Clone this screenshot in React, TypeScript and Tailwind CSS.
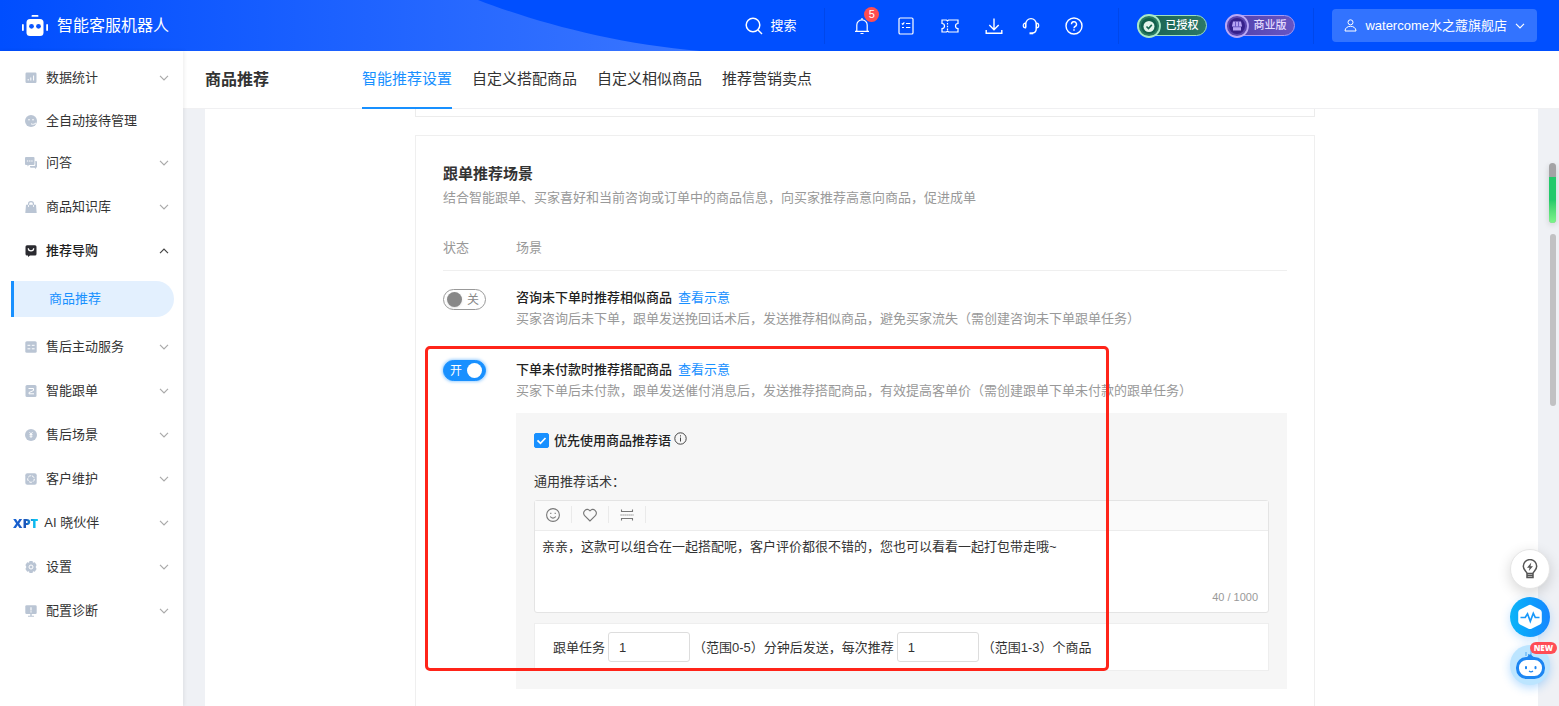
import React, { useState } from 'react';
import type { ReactNode } from 'react';

function Chevron({ up = false, className = '' }: { up?: boolean; className?: string }) {
  return (
    <svg viewBox="0 0 10 6" className={`h-1.5 w-2.5 shrink-0 ${className}`} fill="none" stroke="currentColor" strokeWidth="1.2">
      <path d={up ? 'M1 5.2 5 1.2l4 4' : 'M1 .8l4 4 4-4'} />
    </svg>
  );
}

function RobotLogo() {
  return (
    <svg viewBox="0 0 28 24" className="h-6 w-7" fill="#fff">
      <rect x="10.5" y="1" width="7" height="1.8" rx=".9" />
      <rect x="5.5" y="5" width="17" height="17" rx="3.5" />
      <rect x="1" y="10" width="1.8" height="7" rx=".9" />
      <rect x="25.200" y="10" width="1.8" height="7" rx=".9" />
      <circle cx="10.5" cy="12.3" r="2.4" fill="#0a55ff" />
      <circle cx="17.5" cy="12.3" r="2.4" fill="#0a55ff" />
    </svg>
  );
}

function LineIcon({ children, label }: { children: ReactNode; label: string }) {
  return (
    <svg viewBox="0 0 18 18" role="img" aria-label={label} className="size-[18px]" fill="none" stroke="#fff" strokeWidth="1.2">
      {children}
    </svg>
  );
}

function MenuIcon({ children }: { children: ReactNode }) {
  return (
    <svg viewBox="0 0 12 12" className="size-3 shrink-0" fill="currentColor">
      {children}
    </svg>
  );
}

const icons = {
  stats: (
    <MenuIcon>
      <rect x=".5" y=".5" width="11" height="10.5" rx="1.2" />
      <path d="M3.2 8.5V7M5.8 8.5V5.5M8.6 8.5V3.5" stroke="#fff" />
    </MenuIcon>
  ),
  face: (
    <MenuIcon>
      <circle cx="6" cy="6" r="6" />
      <circle cx="4" cy="4.8" r=".8" fill="#fff" />
      <circle cx="8" cy="4.8" r=".8" fill="#fff" />
      <path d="M6 8.8c1.800 1 4 .4 5-1" stroke="#fff" fill="none" />
    </MenuIcon>
  ),
  chat: (
    <MenuIcon>
      <path d="M1 0h7.500q1 0 1 1v6q0 1-1 1H4L2.500 9.500V8H1q-1 0-1-1V1q0-1 1-1Z" />
      <path d="M10.300 4H11q1 0 1 1v4.800q0 1-1 1V12L9.500 10.800H6q-1 0-1-1V8.900h4.300q1 0 1-1Z" />
      <path d="M1.900 4h1.300M4.100 4h1.300M6.300 4h1.300" stroke="#fff" strokeWidth="1.200" />
    </MenuIcon>
  ),
  bag: (
    <MenuIcon>
      <path d="M1 3.800h10l.7 8.200H.3Z" />
      <path d="M3.500 6V3.200a2.500 2.500 0 0 1 5 0V6" fill="none" stroke="currentColor" strokeWidth="1.200" />
      <path d="M3.500 4v2M8.500 4v2" stroke="#fff" strokeWidth=".8" />
    </MenuIcon>
  ),
  guide: (
    <MenuIcon>
      <path d="M2 .3h8q1.500 0 1.500 1.500v7.200q0 1.500-1.500 1.500H5L3 12v-1.500H2Q.5 10.500.5 9V1.800Q.5.3 2 .3Z" />
      <path d="M3.300 3.200a2.700 2.700 0 0 0 5.400 0" fill="none" stroke="#fff" strokeWidth="1.200" />
    </MenuIcon>
  ),
  grid: (
    <MenuIcon>
      <rect x=".3" y=".3" width="11.400" height="11.400" rx="1.500" />
      <path d="M2.500 4.300h2.800M6.800 4.300h2.800M2.500 7.800h2.800M6.800 7.800h2.800" stroke="#fff" />
    </MenuIcon>
  ),
  order: (
    <MenuIcon>
      <rect x=".5" y="0" width="11" height="12" rx="1.500" />
      <path d="M3.500 3.500h5v2l-4.500 2v1.300h5" fill="none" stroke="#fff" />
    </MenuIcon>
  ),
  yen: (
    <MenuIcon>
      <circle cx="6" cy="6" r="6" />
      <path d="M4.500 3.200 6 5l1.500-1.800M6 5v4M4.500 5.500h3M4.500 7.200h3" fill="none" stroke="#fff" strokeWidth=".9" />
    </MenuIcon>
  ),
  customer: (
    <MenuIcon>
      <rect x=".3" y=".3" width="11.400" height="11.400" rx="2" />
      <circle cx="6" cy="6" r="3.300" fill="none" stroke="#fff" strokeDasharray="3 1" />
    </MenuIcon>
  ),
  gear: (
    <MenuIcon>
      <path d="M4.500 0h3L8 1.700l1.800-.4L11.600 4l-1 2 1 2-1.800 2.700L8 10.300 7.500 12h-3L4 10.300l-1.800.4L.4 8l1-2-1-2 1.800-2.700L4 1.700Z" />
      <circle cx="6" cy="6" r="2" fill="none" stroke="#fff" />
    </MenuIcon>
  ),
  monitor: (
    <MenuIcon>
      <rect x=".3" y=".3" width="11.400" height="8.700" rx="1.300" />
      <path d="M5.300 9h1.400v1.800H5.300ZM3 10.700h6v1H3Z" />
      <path d="M6 2.200v3.200M6 6.300v1.200" stroke="#fff" strokeWidth="1.100" />
    </MenuIcon>
  ),
};

type MenuEntry = { label: string; icon?: ReactNode; expandable?: boolean; active?: boolean; brand?: boolean; child?: string };

const menu: MenuEntry[] = [
  { label: '数据统计', icon: icons.stats, expandable: true },
  { label: '全自动接待管理', icon: icons.face },
  { label: '问答', icon: icons.chat, expandable: true },
  { label: '商品知识库', icon: icons.bag, expandable: true },
  { label: '推荐导购', icon: icons.guide, expandable: true, active: true, child: '商品推荐' },
  { label: '售后主动服务', icon: icons.grid, expandable: true },
  { label: '智能跟单', icon: icons.order, expandable: true },
  { label: '售后场景', icon: icons.yen, expandable: true },
  { label: '客户维护', icon: icons.customer, expandable: true },
  { label: 'AI 晓伙伴', brand: true, expandable: true },
  { label: '设置', icon: icons.gear, expandable: true },
  { label: '配置诊断', icon: icons.monitor, expandable: true },
];

function Sidebar() {
  return (
    <nav aria-label="主菜单" className="relative z-10 w-[183px] shrink-0 bg-white pt-[5px] shadow-[1px_0_4px_rgba(0,0,0,0.08)]">
      <ul>
        {menu.map((item) => (
          <li key={item.label}>
            <button
              type="button"
              className={`flex w-full items-center pr-[14px] text-[13px] ${item.expandable ? 'h-11' : 'h-[41px]'} ${
                item.brand ? 'gap-1.5 pl-[13px]' : 'gap-[9px] pl-[25px]'
              } ${item.active ? 'font-medium text-[#222]' : 'text-[#333]'}`}
            >
              {item.brand ? (
                <span className="bg-linear-to-r from-[#1565d8] via-[#1d55b8] to-[#08c4f4] to-90% bg-clip-text font-['Open_Sans'] text-[13px] leading-4 font-extrabold text-transparent">
                  XPT
                </span>
              ) : (
                <span className={item.active ? 'text-[#2b2b30]' : 'text-[#bac5d4]'}>{item.icon}</span>
              )}
              <span>{item.label}</span>
              {item.expandable && <Chevron up={item.active} className={`ml-auto ${item.active ? 'text-[#444]' : 'text-[#aaa]'}`} />}
            </button>
            {item.child && (
              <a
                href="#recommend"
                className="my-2 mr-[9px] ml-[11px] flex h-9 items-center rounded-r-full border-l-[3px] border-[#1890ff] bg-[#e3f0fe] pl-[35px] text-[13px] text-[#1890ff]"
              >
                {item.child}
              </a>
            )}
          </li>
        ))}
      </ul>
    </nav>
  );
}

function HeaderBackdrop() {
  return (
    <svg viewBox="0 0 700 51" className="absolute top-0 left-0 h-full w-[700px]" preserveAspectRatio="none" aria-hidden="true">
      <defs>
        <linearGradient id="wave" x1="0" x2="1" y1="0" y2="0">
          <stop offset="0" stopColor="#004eff" />
          <stop offset="1" stopColor="#3b76ff" />
        </linearGradient>
      </defs>
      <path d="M0 0H478C535 22 615 44 700 51H0Z" fill="url(#wave)" />
    </svg>
  );
}

function AuthPill() {
  return (
    <span className="relative flex h-6 w-[70px] items-center">
      <span className="flex h-[21px] w-full items-center justify-end rounded-full border border-[#9fe0bd] bg-linear-to-r from-[#16604f] to-[#2c7866] pr-2 text-[11px] font-medium text-white">
        已授权
      </span>
      <svg viewBox="0 0 24 24" className="absolute left-0 size-6" aria-hidden="true">
        <circle cx="12" cy="12" r="11" fill="#2a7a62" stroke="#a9e8c6" strokeWidth="1.800" />
        <circle cx="12" cy="12" r="8" fill="#11604c" />
        <circle cx="12" cy="12.500" r="5.500" fill="#e4f5ec" />
        <path d="m9.500 12.500 2 2 3.300-3.600" fill="none" stroke="#17664f" strokeWidth="1.600" />
      </svg>
    </span>
  );
}

function EditionPill() {
  return (
    <span className="relative flex h-6 w-[70px] items-center">
      <span className="flex h-[21px] w-full items-center justify-end rounded-full border border-[#a99af0] bg-linear-to-r from-[#5140a8] to-[#6655c4] pr-2 text-[11px] font-medium text-[#e4dcff]">
        商业版
      </span>
      <svg viewBox="0 0 24 24" className="absolute left-0 size-6" aria-hidden="true">
        <circle cx="12" cy="12" r="11" fill="#5a46b0" stroke="#b9a8f6" strokeWidth="1.800" />
        <circle cx="12" cy="12" r="8" fill="#35208a" />
        <path d="M8 7.500h8l1 4.500a2 2 0 0 1-1 1V16.500H8V13a2 2 0 0 1-1-1Z" fill="#b5a2f4" />
        <path d="M10.500 7.500v5M13.500 7.500v5M8 12.800h8" stroke="#5a46b8" strokeWidth=".8" />
      </svg>
    </span>
  );
}

function Header() {
  return (
    <header className="relative flex h-[51px] shrink-0 items-center bg-[#004fff] pr-[22px] pl-[21px] text-white">
      <HeaderBackdrop />
      <div className="relative flex items-center gap-2">
        <RobotLogo />
        <span className="text-[16px] leading-6">智能客服机器人</span>
      </div>

      <div className="relative ml-auto flex items-center text-[13px]">
        <button type="button" className="mr-7 flex items-center gap-[7px]">
          <LineIcon label="">
            <circle cx="8" cy="8" r="6.800" strokeWidth="1.500" />
            <path d="m13 13 4 4" strokeWidth="1.500" />
          </LineIcon>
          搜索
        </button>
        <span className="mr-7 h-9 w-px bg-[#0047ea]" />
        <button type="button" className="relative mr-[26px]">
          <LineIcon label="通知">
            <path d="M3.800 14V8a5.200 5.200 0 0 1 10.400 0v6M2 14.300h14M9 1v1.800M7.500 16.500h3" />
          </LineIcon>
          <span className="absolute -top-[10px] -right-2 flex size-[15px] items-center justify-center rounded-full bg-[#ff4d4f] text-[11px] leading-none">5</span>
        </button>
        <button type="button" className="mr-[26px]">
          <LineIcon label="清单">
            <rect x="2" y="1" width="14" height="16" rx="1.300" />
            <path d="m4.800 6.300 1 1 1.500-2M5 10.500h2M9 6.500h4.300M9 10.500h4.300" />
          </LineIcon>
        </button>
        <button type="button" className="mr-[26px]">
          <LineIcon label="卡券">
            <path d="M1 3h4.500l1 1 1-1H17v3.500a2.500 2.500 0 0 0 0 5V15H7.500l-1-1-1 1H1v-3.500a2.500 2.500 0 0 0 0-5Z" />
            <path d="M6.500 6v7" strokeDasharray="1.500 1.200" />
          </LineIcon>
        </button>
        <button type="button" className="mr-[19px]">
          <LineIcon label="下载">
            <path d="M9 1.500v11M4.300 8 9 12.700 13.700 8M1.200 13v3.300h15.600V13" strokeWidth="1.400" />
          </LineIcon>
        </button>
        <button type="button" className="mr-[25px]">
          <LineIcon label="客服">
            <path d="M3.800 10.500V6.800a5.200 5.200 0 0 1 10.400 0v5.200c0 2-1.500 3.700-3.500 4" strokeWidth="1.400" />
            <path d="M3.500 6.200C.5 6.200.5 11 3.500 11ZM14.500 6.200c3 0 3 4.800 0 4.800Z" />
            <path d="M7.500 16.300h3.700" strokeWidth="2" />
          </LineIcon>
        </button>
        <button type="button" className="mr-[35px]">
          <LineIcon label="帮助">
            <circle cx="9" cy="9" r="8" strokeWidth="1.400" />
            <path d="M6.500 7.300a2.500 2.500 0 1 1 3.600 2.200c-.8.400-1.100.8-1.100 1.700M9 12.300v1.400" strokeWidth="1.400" />
          </LineIcon>
        </button>
        <span className="mr-[18px] h-9 w-px bg-[#0047ea]" />
        <AuthPill />
        <span className="w-[18px]" />
        <EditionPill />
        <span className="mr-[18px] ml-[18px] h-9 w-px bg-[#0047ea]" />
        <button type="button" className="flex h-[33px] items-center gap-2 rounded bg-[#3273ff] px-3">
          <svg viewBox="0 0 13 13" className="size-[13px]" fill="none" stroke="#fff" aria-hidden="true">
            <circle cx="6.500" cy="3.300" r="2.500" />
            <path d="M1 12c0-6.300 11-6.300 11 0Z" />
          </svg>
          <span>watercome水之蔻旗舰店</span>
          <Chevron />
        </button>
      </div>
    </header>
  );
}

const tabs = ['智能推荐设置', '自定义搭配商品', '自定义相似商品', '推荐营销卖点'];

function PageBar() {
  return (
    <div className="flex h-[58px] shrink-0 items-stretch border-b border-[#f0f0f2] bg-white pl-[22px]">
      <h1 className="self-center text-[16px] leading-6 font-bold text-[#333]">商品推荐</h1>
      <div role="tablist" className="-mb-px ml-[93px] flex gap-5">
        {tabs.map((tab, i) => (
          <button
            key={tab}
            type="button"
            role="tab"
            aria-selected={i === 0}
            className={`border-b-2 text-[15px] ${i === 0 ? 'border-[#1890ff] text-[#1890ff]' : 'border-transparent text-[#333]'}`}
          >
            {tab}
          </button>
        ))}
      </div>
    </div>
  );
}

function Toggle({ initial, label }: { initial: boolean; label: string }) {
  const [on, setOn] = useState(initial);
  return (
    <button
      type="button"
      role="switch"
      aria-checked={on}
      aria-label={label}
      onClick={() => setOn(!on)}
      className={`flex h-[21px] w-[43px] items-center justify-between rounded-full border text-[12px] leading-none ${
        on
          ? 'flex-row border-[#1890ff] bg-[#1890ff] pr-[3px] pl-1.5 text-white shadow-[0_0_3px_1px_rgba(24,144,255,0.4)]'
          : 'flex-row-reverse border-[#999] bg-white pr-1.5 pl-[3px] text-[#888]'
      }`}
    >
      <span>{on ? '开' : '关'}</span>
      <span className={`size-[15px] rounded-full ${on ? 'bg-white' : 'bg-[#888] shadow-sm'}`} />
    </button>
  );
}

function SceneText({ title, desc }: { title: string; desc: string }) {
  return (
    <div className="text-[13px] leading-[21px]">
      <div className="flex gap-1.5">
        <h3 className="font-medium text-[#222]">{title}</h3>
        <a href="#demo" className="text-[#1890ff]">
          查看示意
        </a>
      </div>
      <p className="text-[#999]">{desc}</p>
    </div>
  );
}

function ToolButton({ label, children }: { label: string; children: ReactNode }) {
  return (
    <button type="button" aria-label={label} className="flex h-[17px] w-[37px] items-center justify-center border-r border-[#eaeaea]">
      <svg viewBox="0 0 14 14" className="size-3.5" fill="none" stroke="#777" strokeWidth="1.100">
        {children}
      </svg>
    </button>
  );
}

function MessageEditor() {
  return (
    <div className="rounded-[3px] border border-[#e4e4e4] bg-white">
      <div className="flex h-[30px] items-center border-b border-[#ececec] bg-[#fafafa] pb-0.5">
        <ToolButton label="表情">
          <circle cx="7" cy="7" r="6.400" />
          <path d="M4.800 4.800v1.200M9.200 4.800v1.200M4.300 8.600c1 2 4.400 2 5.400 0" />
        </ToolButton>
        <ToolButton label="收藏">
          <path d="M7 13 1.400 7.400C-1 3.800 3.500-1 7 2.800c3.500-3.800 8 1 5.600 4.600Z" />
        </ToolButton>
        <ToolButton label="分段">
          <path d="M1.500 1.500v2h11v-2M1.500 12.500v-2h11v2" />
          <path d="M.5 7h13" strokeDasharray="1.200 .8" />
        </ToolButton>
      </div>
      <textarea
        id="script"
        className="block h-14 w-full resize-none px-[7px] pt-[5px] text-[13px] leading-[21px] text-[#333] outline-none"
        defaultValue="亲亲，这款可以组合在一起搭配呢，客户评价都很不错的，您也可以看看一起打包带走哦~"
      />
      <div className="pr-2.5 pb-[5px] text-right text-[11px] leading-5 text-[#999]">40 / 1000</div>
    </div>
  );
}

function SmallInput({ label }: { label: string }) {
  return (
    <input
      aria-label={label}
      defaultValue="1"
      className="mx-[3px] h-[30px] w-[82px] rounded-[3px] border border-[#ddd] bg-white px-2.5 text-[13px] text-[#333] outline-none"
    />
  );
}

function PairingForm() {
  return (
    <div className="mt-3 bg-[#f6f6f6] px-[18px] pt-[17px] pb-[18px] text-[13px] leading-[21px] text-[#333]">
      <div className="flex items-center">
        <label className="flex items-center gap-[5px] font-medium text-[#222]">
          <span className="relative flex size-[15px]">
            <input type="checkbox" defaultChecked className="peer size-[15px] appearance-none rounded-[2px] border border-[#ccc] bg-white checked:border-[#1890ff] checked:bg-[#1890ff]" />
            <svg viewBox="0 0 15 15" className="pointer-events-none absolute inset-0 hidden peer-checked:block" fill="none" stroke="#fff" strokeWidth="1.700">
              <path d="m3.500 7.300 3 3 5-5.300" />
            </svg>
          </span>
          优先使用商品推荐语
        </label>
        <svg viewBox="0 0 13 13" className="mb-1 ml-[3px] size-[13px]" fill="none" stroke="#444" aria-hidden="true">
          <circle cx="6.500" cy="6.500" r="5.700" />
          <path d="M6.500 5.500v4M6.500 3.300v1.200" />
        </svg>
      </div>
      <label htmlFor="script" className="mt-5 mb-2 block">
        通用推荐话术：
      </label>
      <MessageEditor />
      <div className="mt-2.5 flex items-center border border-[#eee] bg-white px-[18px] py-2">
        跟单任务
        <SmallInput label="延迟分钟数" />
        （范围0-5）分钟后发送，每次推荐
        <SmallInput label="推荐商品数" />
        （范围1-3）个商品
      </div>
    </div>
  );
}

function SceneCard() {
  return (
    <section className="mt-[18px] min-h-[640px] border border-[#efefef] bg-white px-[27px] pt-7">
      <h2 className="text-[15px] leading-5 font-bold text-[#333]">跟单推荐场景</h2>
      <p className="mt-1 text-[13px] leading-5 text-[#999]">结合智能跟单、买家喜好和当前咨询或订单中的商品信息，向买家推荐高意向商品，促进成单</p>
      <table className="mt-7 w-full border-separate border-spacing-0 text-left text-[13px]">
        <thead>
          <tr className="leading-5 text-[#999]">
            <th className="h-[35px] w-[73px] border-b border-[#efefef] pb-3 align-bottom font-normal">状态</th>
            <th className="h-[35px] border-b border-[#efefef] pb-3 align-bottom font-normal">场景</th>
          </tr>
        </thead>
        <tbody>
          <tr className="align-top">
            <td className="pt-[18px]">
              <Toggle initial={false} label="咨询未下单时推荐相似商品" />
            </td>
            <td className="pt-4 pb-3.5">
              <SceneText
                title="咨询未下单时推荐相似商品"
                desc="买家咨询后未下单，跟单发送挽回话术后，发送推荐相似商品，避免买家流失（需创建咨询未下单跟单任务）"
              />
            </td>
          </tr>
          <tr className="align-top">
            <td className="relative pt-[17px]">
              <Toggle initial label="下单未付款时推荐搭配商品" />
              <div className="pointer-events-none absolute top-[3px] -left-[18px] z-10 h-[325px] w-[684px] rounded-[5px] border-[3px] border-[#ff2419]" />
            </td>
            <td className="pt-4">
              <SceneText
                title="下单未付款时推荐搭配商品"
                desc="买家下单后未付款，跟单发送催付消息后，发送推荐搭配商品，有效提高客单价（需创建跟单下单未付款的跟单任务）"
              />
              <PairingForm />
            </td>
          </tr>
        </tbody>
      </table>
    </section>
  );
}

function FloatingTools() {
  return (
    <div className="absolute right-[9px] bottom-[21px] z-20 flex flex-col gap-2">
      <button type="button" aria-label="提示" className="flex size-10 items-center justify-center rounded-full border border-[#e6e6e6] bg-white shadow-[0_4px_14px_rgba(0,0,0,0.16)]">
        <svg viewBox="0 0 16 20" className="h-5 w-4" fill="none" stroke="#555" strokeWidth="1.500">
          <path d="M5 14.500c0-2-3.700-3.200-3.700-7.200a6.700 6.700 0 0 1 13.400 0c0 4-3.700 5.200-3.700 7.200ZM5 14.500V18.500h6v-4M5 16.500h6" />
          <path d="M9.300 3.500 5 8.800h2.500L6.800 12 11 7.200H8.500Z" fill="#555" stroke="none" />
        </svg>
      </button>
      <button type="button" aria-label="诊断" className="flex size-10 items-center justify-center rounded-full bg-linear-to-r from-[#0cb4f8] to-[#1787ff] shadow-[0_3px_10px_rgba(24,144,255,0.25)]">
        <svg viewBox="0 0 26 26" className="size-[26px]">
          <path d="M13 .8q1 0 2 .6l8 4q1.800 1 1.800 3v9q0 2-1.800 3l-8 4q-2 1.200-4 0l-8-4q-1.800-1-1.800-3v-9q0-2 1.800-3l8-4q1-.6 2-.6Z" fill="#fff" />
          <path d="M3.500 13.500h4.700l2.300-3.700 2.800 7.500 3-8 2 4.200h4.200" fill="none" stroke="#1898fa" strokeWidth="1.700" />
        </svg>
      </button>
      <button type="button" aria-label="智能助手" className="relative flex size-10 items-center justify-center rounded-full bg-[#bce5ff] shadow-[0_3px_10px_rgba(24,144,255,0.3)]">
        <svg viewBox="0 0 40 40" className="size-10">
          <path d="M16 7v4M18.500 9v3M21 5v8" stroke="#4aa8f5" fill="none" />
          <path d="M16 13 20 9l5 4Z" fill="#1c84ee" />
          <rect x="7.500" y="13.500" width="26" height="19" rx="9" fill="#fff" stroke="#1c86f2" strokeWidth="3" />
          <rect x="15" y="21" width="2" height="3.200" rx="1" fill="#1c86f2" />
          <rect x="24.500" y="21" width="2" height="3.200" rx="1" fill="#1c86f2" />
          <path d="M19 26q2 1.600 4 0" stroke="#1c86f2" fill="none" strokeWidth="1.300" />
        </svg>
        <span className="absolute -top-[3px] -right-[7px] flex h-3 items-center rounded-full bg-[#ff4d55] px-1 font-['Open_Sans'] text-[8px] leading-none font-extrabold text-white">
          NEW
        </span>
      </button>
    </div>
  );
}

function ScrollRail() {
  return (
    <div className="absolute top-0 right-0 h-full w-[21px]" aria-hidden="true">
      <div className="absolute top-[54px] right-[3px] h-[60px] w-[7px] overflow-hidden rounded-full bg-[#a3a3a5] pt-3.5 shadow-[0_2px_6px_rgba(0,0,0,0.15)]">
        <div className="h-full bg-linear-to-b from-[#22c96a] from-50% to-[#7cf58a]" />
      </div>
      <div className="absolute top-[125px] right-[3px] h-[172px] w-1.5 rounded-full bg-[#c1c1c3]" />
    </div>
  );
}

export default function App() {
  return (
    <div className="relative flex h-screen flex-col overflow-hidden bg-white font-['Liberation_Sans','Noto_Sans_CJK_SC',sans-serif]">
      <Header />
      <div className="flex min-h-0 flex-1">
        <Sidebar />
        <div className="flex min-w-0 flex-1 flex-col">
          <PageBar />
          <main className="relative min-h-0 flex-1 overflow-hidden bg-[#eff1f5] pr-[21px] pl-[22px]">
            <div className="bg-white pr-[13px]">
              <div className="mx-auto w-full max-w-[900px]">
                <div className="h-2 border-x border-b border-[#ececec]" />
                <SceneCard />
              </div>
            </div>
            <ScrollRail />
          </main>
        </div>
      </div>
      <FloatingTools />
    </div>
  );
}
